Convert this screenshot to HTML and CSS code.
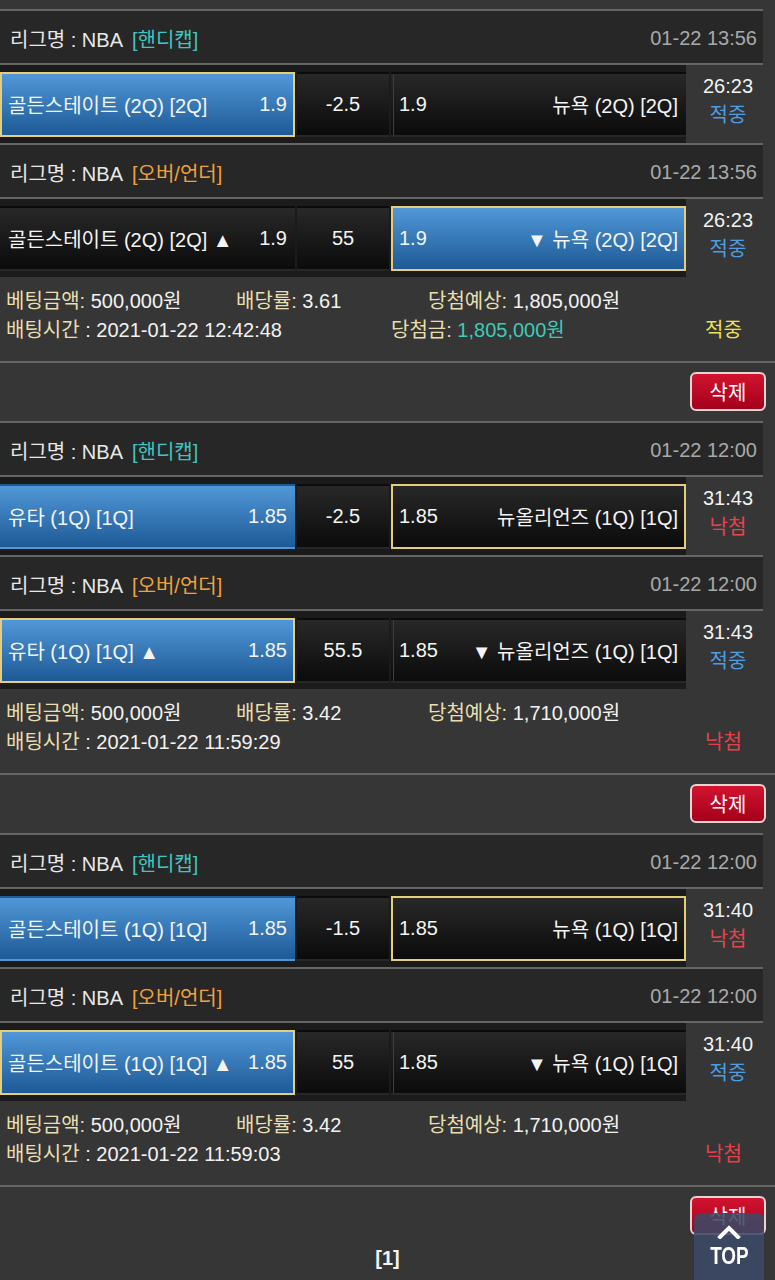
FILE: index.html
```html
<!DOCTYPE html>
<html lang="ko">
<head>
<meta charset="utf-8">
<title>배팅내역</title>
<link rel="stylesheet" href="styles.css">
</head>
<body>
<main class="page">

  <section class="group">
    <div class="match">
      <div class="league"><span class="lname">리그명 : NBA</span><span class="tag hc">[핸디캡]</span><span class="date">01-22 13:56</span></div>
      <div class="bet">
        <div class="picks">
          <div class="cell blue pick"><span>골든스테이트 (2Q) [2Q]</span><span>1.9</span></div>
          <div class="cell mid">-2.5</div>
          <div class="cell away"><span>1.9</span><span>뉴욕 (2Q) [2Q]</span></div>
        </div>
        <div class="time"><div>26:23</div><div class="res win">적중</div></div>
      </div>
    </div>
    <div class="match">
      <div class="league"><span class="lname">리그명 : NBA</span><span class="tag ou">[오버/언더]</span><span class="date">01-22 13:56</span></div>
      <div class="bet">
        <div class="picks">
          <div class="cell"><span>골든스테이트 (2Q) [2Q] ▲</span><span>1.9</span></div>
          <div class="cell mid">55</div>
          <div class="cell away blue pick"><span>1.9</span><span>▼ 뉴욕 (2Q) [2Q]</span></div>
        </div>
        <div class="time"><div>26:23</div><div class="res win">적중</div></div>
      </div>
    </div>
    <div class="info">
      <div class="row">
        <div class="c1"><span class="lb">베팅금액:</span> 500,000원</div>
        <div class="c2"><span class="lb">배당률:</span> 3.61</div>
        <div class="c3"><span class="lb">당첨예상:</span> 1,805,000원</div>
      </div>
      <div class="row">
        <div class="d1"><span class="lb">배팅시간</span> : 2021-01-22 12:42:48</div>
        <div class="d2"><span class="lb">당첨금:</span> <span class="won">1,805,000원</span></div>
        <div class="d3 final-win">적중</div>
      </div>
    </div>
    <div class="actions"><button class="del" type="button">삭제</button></div>
  </section>

  <section class="group">
    <div class="match">
      <div class="league"><span class="lname">리그명 : NBA</span><span class="tag hc">[핸디캡]</span><span class="date">01-22 12:00</span></div>
      <div class="bet">
        <div class="picks">
          <div class="cell blue"><span>유타 (1Q) [1Q]</span><span>1.85</span></div>
          <div class="cell mid">-2.5</div>
          <div class="cell away pick"><span>1.85</span><span>뉴올리언즈 (1Q) [1Q]</span></div>
        </div>
        <div class="time"><div>31:43</div><div class="res lose">낙첨</div></div>
      </div>
    </div>
    <div class="match">
      <div class="league"><span class="lname">리그명 : NBA</span><span class="tag ou">[오버/언더]</span><span class="date">01-22 12:00</span></div>
      <div class="bet">
        <div class="picks">
          <div class="cell blue pick"><span>유타 (1Q) [1Q] ▲</span><span>1.85</span></div>
          <div class="cell mid">55.5</div>
          <div class="cell away"><span>1.85</span><span>▼ 뉴올리언즈 (1Q) [1Q]</span></div>
        </div>
        <div class="time"><div>31:43</div><div class="res win">적중</div></div>
      </div>
    </div>
    <div class="info">
      <div class="row">
        <div class="c1"><span class="lb">베팅금액:</span> 500,000원</div>
        <div class="c2"><span class="lb">배당률:</span> 3.42</div>
        <div class="c3"><span class="lb">당첨예상:</span> 1,710,000원</div>
      </div>
      <div class="row">
        <div class="d1"><span class="lb">배팅시간</span> : 2021-01-22 11:59:29</div>
        <div class="d2"></div>
        <div class="d3 final-lose">낙첨</div>
      </div>
    </div>
    <div class="actions"><button class="del" type="button">삭제</button></div>
  </section>

  <section class="group">
    <div class="match">
      <div class="league"><span class="lname">리그명 : NBA</span><span class="tag hc">[핸디캡]</span><span class="date">01-22 12:00</span></div>
      <div class="bet">
        <div class="picks">
          <div class="cell blue"><span>골든스테이트 (1Q) [1Q]</span><span>1.85</span></div>
          <div class="cell mid">-1.5</div>
          <div class="cell away pick"><span>1.85</span><span>뉴욕 (1Q) [1Q]</span></div>
        </div>
        <div class="time"><div>31:40</div><div class="res lose">낙첨</div></div>
      </div>
    </div>
    <div class="match">
      <div class="league"><span class="lname">리그명 : NBA</span><span class="tag ou">[오버/언더]</span><span class="date">01-22 12:00</span></div>
      <div class="bet">
        <div class="picks">
          <div class="cell blue pick"><span>골든스테이트 (1Q) [1Q] ▲</span><span>1.85</span></div>
          <div class="cell mid">55</div>
          <div class="cell away"><span>1.85</span><span>▼ 뉴욕 (1Q) [1Q]</span></div>
        </div>
        <div class="time"><div>31:40</div><div class="res win">적중</div></div>
      </div>
    </div>
    <div class="info">
      <div class="row">
        <div class="c1"><span class="lb">베팅금액:</span> 500,000원</div>
        <div class="c2"><span class="lb">배당률:</span> 3.42</div>
        <div class="c3"><span class="lb">당첨예상:</span> 1,710,000원</div>
      </div>
      <div class="row">
        <div class="d1"><span class="lb">배팅시간</span> : 2021-01-22 11:59:03</div>
        <div class="d2"></div>
        <div class="d3 final-lose">낙첨</div>
      </div>
    </div>
    <div class="actions"><button class="del" type="button">삭제</button></div>
  </section>

  <div class="pager">[1]</div>
</main>

<a class="top" href="#">
  <svg class="chev" width="24" height="14" viewBox="0 0 24 14"><polyline points="3,12 12,3 21,12" fill="none" stroke="#ffffff" stroke-width="4" stroke-linecap="square"/></svg>
  <span class="top-label">TOP</span>
</a>
</body>
</html>
```

FILE: styles.css
```css
html {
  background: #363636;
}

body {
  margin: 0;
  padding-top: 9px;
  background: #363636;
  font-family: "Liberation Sans", "Noto Sans CJK KR", sans-serif;
  font-size: 20px;
  color: #f2f2f2;
}

.match {
  width: 763px;
  border-top: 2px solid #666666;
}

.league {
  height: 49px;
  padding: 3px 6px 0 10px;
  background: #272727;
  border-bottom: 2px solid #666666;
  display: flex;
  align-items: center;
  white-space: nowrap;
}

.lname {
  color: #e8e8e8;
}

.tag {
  margin-left: 9px;
}

.hc {
  color: #42c4bf;
}

.ou {
  color: #f2a23a;
}

.date {
  margin-left: auto;
  color: #a9a9a9;
}

.bet {
  display: flex;
  height: 78px;
}

.picks {
  width: 686px;
  box-sizing: border-box;
  padding: 7px 0 6px;
  background: #1b1b1b;
  display: grid;
  grid-template-columns: 295px 92px 295px;
  column-gap: 2px;
}

.cell {
  border: 2px solid transparent;
  padding: 0 6px;
  background: linear-gradient(#282828, #0b0b0b);
  display: flex;
  align-items: center;
  justify-content: space-between;
  white-space: nowrap;
  color: #f4f4f4;
}

.cell.away {
  box-shadow: inset 1px 0 0 #3e3e3e;
}

.cell.blue {
  background: linear-gradient(#5197d7, #1d5a96);
  box-shadow: none;
}

.cell.pick {
  border-color: #e4cd7c;
  box-shadow: none;
}

.cell.mid {
  justify-content: center;
}

.time {
  flex: 1;
  padding: 7px 0 0 7px;
  line-height: 29px;
  text-align: center;
  color: #f2f2f2;
}

.res.win {
  color: #4c9ee2;
}

.res.lose {
  color: #e8444c;
}

.info {
  padding: 10px 0 16px 6px;
  border-bottom: 2px solid #666666;
  line-height: 29px;
}

.row {
  display: flex;
  white-space: nowrap;
}

.c1 {
  width: 230px;
}

.c2 {
  width: 192px;
}

.d1 {
  width: 385px;
}

.d2 {
  width: 314px;
}

.lb {
  color: #e9dfaf;
}

.won {
  color: #3fcab6;
}

.final-win {
  color: #ece157;
}

.final-lose {
  color: #e8404a;
}

.actions {
  height: 58px;
  box-sizing: border-box;
  padding: 9px 9px 0 0;
  display: flex;
  justify-content: flex-end;
  align-items: flex-start;
}

.del {
  width: 76px;
  height: 39px;
  border: 2px solid #e9d3d3;
  border-radius: 6px;
  background: linear-gradient(#d2142f, #a4001a);
  color: #ffffff;
  font-family: inherit;
  font-size: 20px;
  padding: 0;
}

.pager {
  text-align: center;
  line-height: 26px;
  font-weight: bold;
  color: #f4f4f4;
}

.top {
  position: fixed;
  right: 11px;
  bottom: 0;
  width: 70px;
  height: 67px;
  background: rgba(60, 74, 102, 0.88);
  border-radius: 7px 7px 0 0;
  display: flex;
  flex-direction: column;
  align-items: center;
  text-decoration: none;
}

.chev {
  margin-top: 12px;
  display: block;
}

.top-label {
  margin-top: 7px;
  font-family: "Liberation Sans", sans-serif;
  font-weight: bold;
  font-size: 22px;
  line-height: 20px;
  color: #ffffff;
  transform: scale(0.86, 1.12);
}
```
